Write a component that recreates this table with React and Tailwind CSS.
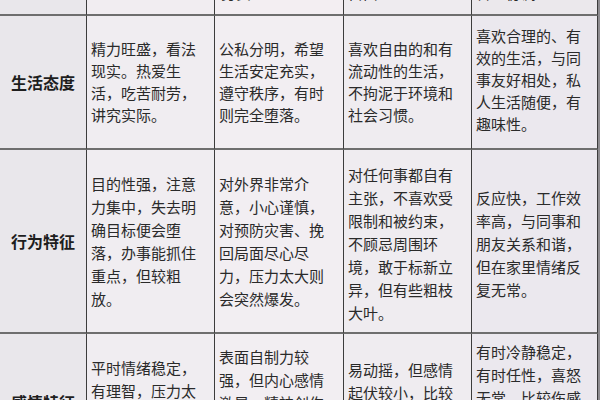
import React from "react";

const font = { fontFamily: '"Noto Sans CJK SC", "Noto Sans", sans-serif' };

function Lines({ lines }) {
  return (
    <div>
      {lines.map((l, i) => (
        <div key={i} className="whitespace-nowrap">{l}</div>
      ))}
    </div>
  );
}

export default function App() {
  const cell = "border-r border-r-[#3c3c3c] border-b-2 border-b-[#6e6e6e] overflow-hidden";
  const body = "text-[15px] leading-[22px] text-[#2a2a2a] pl-[4px]";
  const body2 = "text-[15px] leading-[23px] text-[#2a2a2a] pl-[4px]";
  const label = "flex items-center justify-center text-[16px] font-bold text-[#1e1e1e]";
  return (
    <div style={font} className="w-[600px] h-[400px] overflow-hidden bg-[#8d8b8f]">
      <div className="grid grid-cols-[87px_128px_129px_128px_126px] grid-rows-[16px_134px_184px_100px] w-[598px] bg-[#eeebef]">
        {/* header */}
        <div className={`${cell} bg-[#e9e7eb]`}></div>
        <div className={`${cell} bg-[#f1edf1]`}></div>
        <div className={`${cell} bg-[#f3eef2] ${body} relative`}>
          <div className="absolute left-[6px] top-[-18px] text-[15px] leading-[22px]">务实型</div>
        </div>
        <div className={`${cell} bg-[#eeebef] ${body} relative`}>
          <div className="absolute left-[4px] top-[-18px] text-[15px] leading-[22px]">自由</div>
        </div>
        <div className={`${cell} bg-[#ebe8ec] ${body} relative`}>
          <div className="absolute left-[4px] top-[-18px] text-[15px] leading-[22px]">合理协调型</div>
        </div>

        {/* row 1 */}
        <div className={`${cell} ${label} bg-[#e9e7eb]`}>生活态度</div>
        <div className={`${cell} ${body} flex items-center bg-[#f0edf1]`}>
          <Lines lines={["精力旺盛，看法", "现实。热爱生", "活，吃苦耐劳，", "讲究实际。"]} />
        </div>
        <div className={`${cell} ${body} flex items-center bg-[#f2eef2]`}>
          <Lines lines={["公私分明，希望", "生活安定充实，", "遵守秩序，有时", "则完全堕落。"]} />
        </div>
        <div className={`${cell} ${body} flex items-center bg-[#efecf0]`}>
          <Lines lines={["喜欢自由的和有", "流动性的生活，", "不拘泥于环境和", "社会习惯。"]} />
        </div>
        <div className={`${cell} ${body} flex items-center pb-[4px] bg-[#ebe8ee]`}>
          <Lines lines={["喜欢合理的、有", "效的生活，与同", "事友好相处，私", "人生活随便，有", "趣味性。"]} />
        </div>

        {/* row 2 */}
        <div className={`${cell} ${label} bg-[#e9e7eb]`}>行为特征</div>
        <div className={`${cell} ${body2} flex items-center bg-[#f0edf1]`}>
          <Lines lines={["目的性强，注意", "力集中，失去明", "确目标便会堕", "落，办事能抓住", "重点，但较粗", "放。"]} />
        </div>
        <div className={`${cell} ${body2} flex items-center bg-[#f2eef2]`}>
          <Lines lines={["对外界非常介", "意，小心谨慎，", "对预防灾害、挽", "回局面尽心尽", "力，压力太大则", "会突然爆发。"]} />
        </div>
        <div className={`${cell} ${body2} flex items-center pt-[4px] bg-[#efecf0]`}>
          <Lines lines={["对任何事都自有", "主张，不喜欢受", "限制和被约束，", "不顾忌周围环", "境，敢于标新立", "异，但有些粗枝", "大叶。"]} />
        </div>
        <div className={`${cell} ${body2} flex items-center pt-[4px] bg-[#ebe8ee]`}>
          <Lines lines={["反应快，工作效", "率高，与同事和", "朋友关系和谐，", "但在家里情绪反", "复无常。"]} />
        </div>

        {/* row 3 */}
        <div className={`${cell} flex justify-center pt-[56px] text-[16px] font-bold text-[#1e1e1e] bg-[#e9e7eb]`}>感情特征</div>
        <div className={`${cell} ${body2} pt-[22px] bg-[#f0edf1]`}>
          <Lines lines={["平时情绪稳定，", "有理智，压力太", "大时也会失控。"]} />
        </div>
        <div className={`${cell} ${body2} pt-[11px] bg-[#f2eef2]`}>
          <Lines lines={["表面自制力较", "强，但内心感情", "激昂，精神创伤", "难以平复。"]} />
        </div>
        <div className={`${cell} ${body2} pt-[24px] bg-[#efecf0]`}>
          <Lines lines={["易动摇，但感情", "起伏较小，比较", "开朗乐观。"]} />
        </div>
        <div className={`${cell} ${body2} pt-[6px] bg-[#ebe8ee]`}>
          <Lines lines={["有时冷静稳定，", "有时任性，喜怒", "无常，比较伤感。"]} />
        </div>
      </div>
    </div>
  );
}
